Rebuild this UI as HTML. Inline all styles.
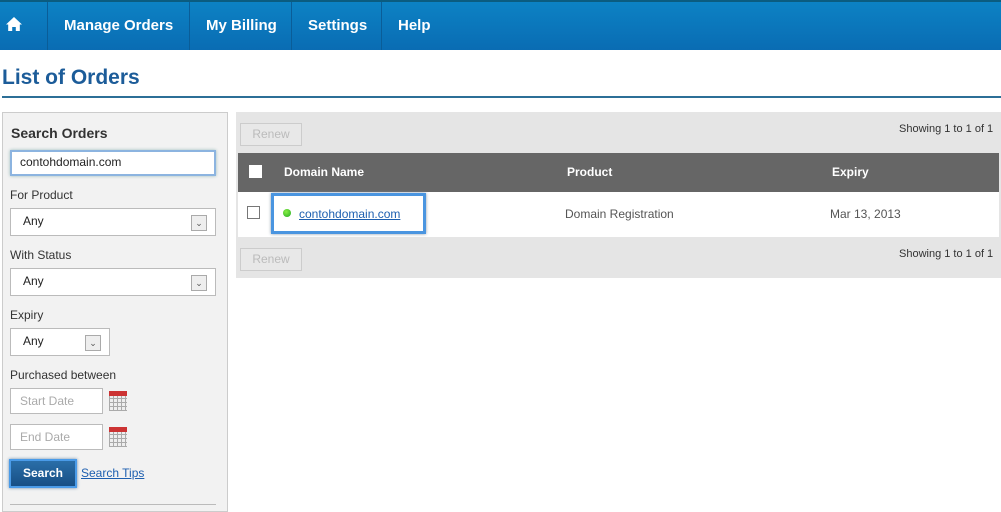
<!DOCTYPE html>
<html><head><meta charset="utf-8"><style>
*{margin:0;padding:0;box-sizing:border-box}
body{width:1001px;height:507px;overflow:hidden;background:#fff;font-family:"Liberation Sans",Arial,sans-serif;position:relative;font-size:12px;color:#333}
.a{position:absolute}
.nav{left:0;top:0;width:1001px;height:50px;background:linear-gradient(#0c82c4,#0a6cb3);border-top:2px solid #0b5c80}
.nav span{position:absolute;top:15px;color:#fff;font-weight:bold;font-size:15px}
.div{top:0;width:1px;height:48px;background:#0a5d98}
.lbl{font-size:12px;color:#333}
.sel{background:#fff;border:1px solid #bbb;height:28px}
.sel .t{position:absolute;left:12px;top:5px;font-size:12px;color:#222}
.arr{position:absolute;top:6px;width:16px;height:16px;border:1px solid #aaa;background:#eee;font-size:9px;text-align:center;line-height:14px;color:#555}
.inp{background:#fff;border:1px solid #bbb;height:26px;width:93px;color:#aaa;padding:5px 9px;font-size:12px}
.cal{width:18px;height:20px;background:#ddd;border-top:5px solid #c33;background-image:repeating-linear-gradient(90deg,#aaa 0 1px,transparent 1px 4px),repeating-linear-gradient(0deg,#aaa 0 1px,#eee 1px 4px)}
.btn{width:62px;height:23px;border:1px solid #ccc;background:#e8e8e8;color:#bbb;font-size:12px;text-align:center;line-height:21px}
</style></head><body>
<div class="a nav">
<svg class="a" style="left:6px;top:14px" width="16" height="16" viewBox="0 0 16 16"><path d="M8 1L0 8.5h2.2V15h4v-4h3.6v4h4V8.5H16z" fill="#fff"/></svg>
<div class="a div" style="left:47px"></div>
<span style="left:64px">Manage Orders</span>
<div class="a div" style="left:189px"></div>
<span style="left:206px">My Billing</span>
<div class="a div" style="left:291px"></div>
<span style="left:308px">Settings</span>
<div class="a div" style="left:381px"></div>
<span style="left:398px">Help</span>
</div>
<div class="a" style="left:2px;top:66px;font-size:21px;font-weight:bold;color:#1c5c99">List of Orders</div>
<div class="a" style="left:2px;top:96px;width:999px;height:2px;background:#2c6f97"></div>

<div class="a" style="left:2px;top:112px;width:226px;height:400px;background:#f2f2f2;border:1px solid #ccc"></div>
<div class="a" style="left:11px;top:125px;font-size:14px;font-weight:bold;color:#333">Search Orders</div>
<div class="a" style="left:10px;top:150px;width:206px;height:26px;background:#fff;border:2px solid #8cb4e0;box-shadow:0 0 3px #9bb;padding:3px 8px;font-size:12px;color:#222">contohdomain.com</div>
<div class="a lbl" style="left:10px;top:188px">For Product</div>
<div class="a sel" style="left:10px;top:208px;width:206px"><div class="t">Any</div><div class="arr" style="left:180px">&#8964;</div></div>
<div class="a lbl" style="left:10px;top:248px">With Status</div>
<div class="a sel" style="left:10px;top:268px;width:206px"><div class="t">Any</div><div class="arr" style="left:180px">&#8964;</div></div>
<div class="a lbl" style="left:10px;top:308px">Expiry</div>
<div class="a sel" style="left:10px;top:328px;width:100px"><div class="t">Any</div><div class="arr" style="left:74px">&#8964;</div></div>
<div class="a lbl" style="left:10px;top:368px">Purchased between</div>
<div class="a inp" style="left:10px;top:388px">Start Date</div>
<div class="a cal" style="left:109px;top:391px"></div>
<div class="a inp" style="left:10px;top:424px">End Date</div>
<div class="a cal" style="left:109px;top:427px"></div>
<div class="a" style="left:9px;top:459px;width:68px;height:29px;background:linear-gradient(#2a6ea8,#174f85);border:2px solid #4a9be8;box-shadow:0 0 3px #68a;color:#fff;font-weight:bold;text-align:center;line-height:25px">Search</div>
<div class="a" style="left:81px;top:466px;color:#1d5fb0;text-decoration:underline">Search Tips</div>
<div class="a" style="left:10px;top:504px;width:206px;height:1px;background:#bbb"></div>

<div class="a" style="left:236px;top:112px;width:765px;height:166px;background:#e5e5e5"></div>
<div class="a btn" style="left:240px;top:123px">Renew</div>
<div class="a" style="left:899px;top:123px;font-size:11px;color:#333">Showing 1 to 1 of 1</div>
<div class="a" style="left:238px;top:153px;width:761px;height:39px;background:#666"></div>
<div class="a" style="left:249px;top:165px;width:13px;height:13px;background:#fff"></div>
<div class="a" style="left:284px;top:165px;color:#fff;font-weight:bold">Domain Name</div>
<div class="a" style="left:567px;top:165px;color:#fff;font-weight:bold">Product</div>
<div class="a" style="left:832px;top:165px;color:#fff;font-weight:bold">Expiry</div>
<div class="a" style="left:238px;top:192px;width:761px;height:45px;background:#fff"></div>
<div class="a" style="left:247px;top:206px;width:13px;height:13px;border:1px solid #777;background:#fff"></div>
<div class="a" style="left:271px;top:193px;width:155px;height:41px;border:3px solid #4a95e0;box-shadow:0 0 3px #89a"></div>
<div class="a" style="left:283px;top:209px;width:8px;height:8px;border-radius:50%;background:radial-gradient(circle at 40% 35%,#8e4,#2a2)"></div>
<div class="a" style="left:299px;top:207px;color:#1d5fb0;text-decoration:underline">contohdomain.com</div>
<div class="a" style="left:565px;top:207px;color:#555">Domain Registration</div>
<div class="a" style="left:830px;top:207px;color:#555">Mar 13, 2013</div>
<div class="a btn" style="left:240px;top:248px">Renew</div>
<div class="a" style="left:899px;top:248px;font-size:11px;color:#333">Showing 1 to 1 of 1</div>
</body></html>
